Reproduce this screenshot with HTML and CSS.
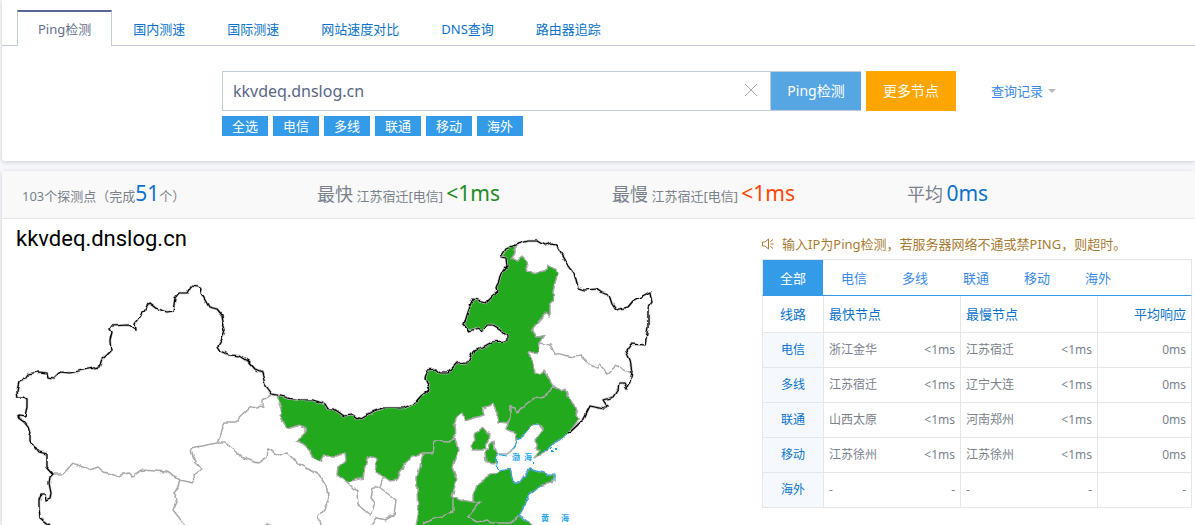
FILE: index.html
```
<!DOCTYPE html>
<html lang="zh-CN">

<head>
    <meta charset="UTF-8">
    <meta name="viewport" content="width=device-width, initial-scale=1.0">
    <title>Ping检测</title>
    <link rel="stylesheet" href="styles.css">
</head>

<body>

    <div class="panel search-panel">
        <nav class="tabs">
            <a href="#" class="active">Ping检测</a>
            <a href="#">国内测速</a>
            <a href="#">国际测速</a>
            <a href="#">网站速度对比</a>
            <a href="#">DNS查询</a>
            <a href="#">路由器追踪</a>
        </nav>

        <form class="search" id="pingForm">
            <div class="search-row">
                <div class="search-box">
                    <input type="text" id="host" name="host" value="kkvdeq.dnslog.cn" aria-label="域名或IP">
                    <button type="button" class="clear" aria-label="清空">
                        <svg width="12" height="12" viewBox="0 0 12 12"><path d="M0 0L12 12M12 0L0 12" stroke="#aaa" fill="none"/></svg>
                    </button>
                </div>
                <button type="button" class="btn btn-ping">Ping检测</button>
                <button type="button" class="btn btn-more">更多节点</button>
                <a href="#" class="history">查询记录<span class="caret"></span></a>
            </div>
            <div class="lines">
                <button type="button">全选</button>
                <button type="button">电信</button>
                <button type="button">多线</button>
                <button type="button">联通</button>
                <button type="button">移动</button>
                <button type="button">海外</button>
            </div>
        </form>
    </div>

    <div class="panel">
        <div class="stats">
            <div>103个探测点（完成<b class="blue">51</b>个）</div>
            <div><span class="name">最快</span> 江苏宿迁[电信] <b class="green">&lt;1ms</b></div>
            <div><span class="name">最慢</span> 江苏宿迁[电信] <b class="red">&lt;1ms</b></div>
            <div><span class="name">平均</span> <b class="blue">0ms</b></div>
        </div>

        <div class="result">
            <div class="map">
                <svg viewBox="2 219 700 306" role="img" aria-label="节点地图">
                    <defs>
                        <!-- roughens the borders -->
                        <filter id="rough" filterUnits="userSpaceOnUse" x="2" y="219" width="700" height="306" color-interpolation-filters="sRGB">
                            <feTurbulence type="fractalNoise" baseFrequency="0.15" numOctaves="1" seed="4"/>
                            <feDisplacementMap in="SourceGraphic" scale="5" xChannelSelector="R" yChannelSelector="G"/>
                        </filter>
                        <path id="border" d="M49 525L40 518L39 507L39 500L41 495L45 495L46 501L50 499L51 493L49 483L50 477L53 474L47 467L47 454L39 452L33 444L29 441L29 437L30 433L28 427L24 422L17 417L19 415L25 416L27 407L27 399L24 397L18 397L17 391L19 382L23 381L28 374L38 372L47 373L48 377L54 378L60 372L70 373L83 370L99 367L102 359L106 356L111 351L110 340L112 332L110 329L111 326L128 325L136 330L135 323L149 303L157 309L167 312L173 311L175 298L179 293L187 293L191 286L198 287L202 289L201 293L209 307L217 309L222 315L223 323L225 330L222 339L218 346L221 351L230 355L240 356L248 361L255 369L262 372L265 386L271 394L277 395L287 398L300 400L313 400L325 404L328 409L334 409L344 416L353 415L358 419L367 414L383 408L404 408L415 403L421 396L430 389L425 379L428 370L435 369L440 373L448 373L457 363L468 362L474 350L483 347L492 342L507 341L507 336L500 329L493 325L487 325L483 331L478 328L469 331L464 325L468 312L473 299L486 302L492 296L497 292L496 288L502 272L507 266L506 258L501 257L506 249L515 245L528 241L537 241L544 245L552 243L559 249L567 263L574 273L578 288L585 290L596 289L602 293L609 295L612 304L616 310L628 307L633 301L650 292L652 303L648 309L648 327L645 345L631 344L626 351L630 360L632 372L630 382L627 388L624 383L619 383L618 389L613 397L603 400L607 406L604 409L590 406L583 420L569 433"/>
                    </defs>
                    <g filter="url(#rough)" stroke-linejoin="round">
                        <g fill="#23a91e" stroke="#a9a9a9" stroke-width="1.5">
                            <!-- Inner Mongolia -->
                            <path d="M277 395L287 398L300 400L313 400L325 404L328 409L334 409L344 416L353 415L358 419L367 414L383 408L404 408L415 403L421 396L430 389L425 379L428 370L435 369L440 373L448 373L457 363L468 362L474 350L483 347L492 342L507 341L507 336L500 329L493 325L487 325L483 331L478 328L469 331L464 325L468 312L473 299L486 302L492 296L497 292L496 288L502 272L507 266L506 258L501 257L506 249L515 246L515 253L512 258L517 261L522 257L526 261L528 272L533 273L547 270L548 265L558 273L555 283L553 292L554 300L550 305L550 317L547 312L533 328L533 331L537 337L544 336L539 343L538 352L528 353L533 362L535 373L540 375L544 371L549 379L553 386L551 392L543 396L533 399L525 405L517 414L515 408L510 407L510 418L508 423L498 422L498 413L493 404L483 408L483 415L465 421L462 413L457 417L454 425L455 438L448 442L435 441L433 453L423 453L413 456L400 470L397 480L390 481L383 476L375 472L377 459L373 456L367 459L365 467L363 478L347 482L337 475L338 467L346 460L345 453L335 456L323 456L320 462L311 456L310 450L301 442L297 441L305 433L305 427L300 425L287 429L280 417L282 413Z"/>
                            <!-- Liaoning -->
                            <path d="M553 386L562 392L565 389L571 401L574 405L579 419L569 433L563 438L553 443L540 456L534 457L540 450L535 448L537 444L536 440L543 430L538 423L532 425L525 433L517 441L516 433L506 429L510 418L510 407L515 408L517 414L525 405L533 399L543 396L551 392Z"/>
                            <!-- Shanxi, Henan, Shandong -->
                            <path d="M423 453L433 453L435 441L448 442L455 438L458 450L452 467L457 480L452 497L460 500L473 502L473 495L478 483L488 476L500 471L510 468L513 482L520 482L523 477L530 469L547 474L555 475L552 483L542 485L528 496L525 505L519 516L533 525V530H414L418 510L417 493L417 477L420 467Z"/>
                            <!-- Beijing, Tianjin -->
                            <path d="M482 428L487 433L490 432L489 441L486 444L485 450L472 450L471 445L475 441L474 435Z"/>
                            <path d="M490 444L493 442L494 448L497 455L496 463L486 462L485 452L489 449Z"/>
                            <path d="M265 526L268 523L272 526Z"/>
                        </g>
                        <g fill="none" stroke="#a9a9a9" stroke-width="1.5">
                            <path d="M53 474L63 474L73 463L90 470L98 467L104 472L117 476L128 473L133 476L142 470L167 472L180 480L194 483L193 475L201 469L193 457L191 448L217 443L220 437L225 422L235 422L250 408L263 406L263 400L271 395"/>
                            <path d="M217 443L225 443L237 452L240 457L258 463L267 457L268 449L280 456L287 453L300 465L310 470L321 477L326 485L329 502L318 517L320 525"/>
                            <path d="M180 480L178 487L174 493L177 500L173 510L185 525"/>
                            <path d="M347 482L357 492L358 505L370 515L375 503L371 498L373 488L380 488L396 500L394 515L385 520L377 518L371 525M380 488L382 480L385 477"/>
                            <path d="M539 343L550 345L555 353L573 357L582 356L590 365L597 368L599 363L607 374L617 365L622 370L631 372"/>
                            <path d="M453 499L453 512L443 516L433 518L423 524M473 502L480 502L468 517L477 522L488 520L492 523L510 523L519 516"/>
                            <path d="M517 441L513 450L507 454L497 454"/>
                        </g>
                        <g fill="none" stroke="#1aa3e8" stroke-width="1">
                            <path d="M538 423L532 425L525 433L517 441L513 450M507 456L497 454L496 466L500 470L510 468L513 482L520 482L530 469L547 474L555 474L555 481M542 485L528 496L525 505L519 516L533 525M569 433L563 438L553 443L540 455"/>
                            <path d="M550 448h2M556 449h2M552 451h2M532 463h2" stroke-width="2"/>
                        </g>
                        <use href="#border" fill="none" stroke="#bbb" stroke-width="2.5"/>
                        <use href="#border" fill="none" stroke="#000" stroke-width="1.2"/>
                    </g>
                    <text class="host" x="16" y="246">kkvdeq.dnslog.cn</text>
                    <g class="sea">
                        <text x="512" y="460">渤</text>
                        <text x="524" y="460">海</text>
                        <text x="541" y="521">黄</text>
                        <text x="561" y="521">海</text>
                    </g>
                </svg>
            </div>

            <div class="summary">
                <p class="notice">
                    <svg width="12" height="12" viewBox="0 0 12 12" fill="none" stroke="#a87b32"><path d="M.5 4H3L6.500 1V11L3 8H.5ZM8.500 3.500L11 1.500M8.500 6H11.500M8.500 8.500L11 10.500"/></svg>
                    输入IP为Ping检测，若服务器网络不通或禁PING，则超时。
                </p>
                <div class="line-tabs">
                    <button type="button" class="active">全部</button>
                    <button type="button">电信</button>
                    <button type="button">多线</button>
                    <button type="button">联通</button>
                    <button type="button">移动</button>
                    <button type="button">海外</button>
                </div>
                <table>
                    <thead>
                        <tr>
                            <th class="line">线路</th>
                            <th class="node">最快节点</th>
                            <th class="node">最慢节点</th>
                            <th class="avg">平均响应</th>
                        </tr>
                    </thead>
                    <tbody>
                        <tr>
                            <th>电信</th>
                            <td><div>浙江金华<span>&lt;1ms</span></div></td>
                            <td><div>江苏宿迁<span>&lt;1ms</span></div></td>
                            <td class="avg">0ms</td>
                        </tr>
                        <tr>
                            <th>多线</th>
                            <td><div>江苏宿迁<span>&lt;1ms</span></div></td>
                            <td><div>辽宁大连<span>&lt;1ms</span></div></td>
                            <td class="avg">0ms</td>
                        </tr>
                        <tr>
                            <th>联通</th>
                            <td><div>山西太原<span>&lt;1ms</span></div></td>
                            <td><div>河南郑州<span>&lt;1ms</span></div></td>
                            <td class="avg">0ms</td>
                        </tr>
                        <tr>
                            <th>移动</th>
                            <td><div>江苏徐州<span>&lt;1ms</span></div></td>
                            <td><div>江苏徐州<span>&lt;1ms</span></div></td>
                            <td class="avg">0ms</td>
                        </tr>
                        <tr>
                            <th>海外</th>
                            <td><div>-<span>-</span></div></td>
                            <td><div>-<span>-</span></div></td>
                            <td class="avg">-</td>
                        </tr>
                    </tbody>
                </table>
            </div>
        </div>
    </div>

</body>

</html>
```
FILE: styles.css
```
* {
    box-sizing: border-box;
}

body {
    margin: 0;
    padding-left: 2px;
    background-color: #f6f8fb;
    color: #7a828c;
    font: 13px/20px "Noto Sans", "Noto Sans CJK SC", sans-serif;
}

a {
    color: #0b73cc;
    text-decoration: none;
}

button {
    border: none;
    padding: 0;
    background: none;
    font: inherit;
    cursor: pointer;
}

.panel {
    background-color: #fff;
    box-shadow: 0 1px 5px rgba(0, 0, 0, 0.18);
}

.search-panel {
    margin-bottom: 10px;
    padding-top: 10px;
    border-radius: 0 0 0 3px;
}

.tabs {
    display: flex;
    padding-left: 15px;
    border-bottom: 1px solid #c3cad9;
}

.tabs a {
    height: 35px;
    padding: 7px 20px 0;
    border: 1px solid transparent;
    border-top-width: 2px;
    border-bottom: none;
}

.tabs .active {
    height: 36px;
    margin-bottom: -1px;
    border-color: #566890 #c3cad9;
    background-color: #fff;
    color: #66708c;
}

.search {
    padding: 25px 20px 25px 220px;
}

.search-row {
    display: flex;
    height: 40px;
}

.search-box {
    display: flex;
    flex: 0 1 549px;
    border: 1px solid #c3cad9;
}

.search-box input {
    flex: 1;
    min-width: 0;
    padding: 0 10px;
    border: none;
    outline: none;
    color: #5a6785;
    font: inherit;
    font-size: 16px;
}

.clear {
    width: 38px;
}

.btn {
    flex: none;
    width: 90px;
    color: #fff;
    font-size: 14px;
}

.btn-ping {
    border: 1px solid #c3cad9;
    border-width: 1px 0;
    background-color: #56a6e3;
}

.btn-more {
    margin-left: 5px;
    background-color: #ffa500;
}

.history {
    display: flex;
    align-items: center;
    gap: 5px;
    margin-left: 35px;
    white-space: nowrap;
    color: #3a8ae5;
}

.caret {
    border: 4px solid transparent;
    border-top-color: #bbb;
    border-bottom: none;
}

.lines {
    display: flex;
    gap: 5px;
    padding-top: 5px;
}

.lines button {
    height: 20px;
    padding: 0 10px;
    background-color: #339be8;
    color: #fff;
}

.stats {
    display: grid;
    grid-template-columns: repeat(4, 1fr);
    padding-right: 13px;
    border-bottom: 1px solid #e6e6e6;
    background-color: #f9f9f9;
    line-height: 44px;
    white-space: nowrap;
}

.stats div {
    padding-left: 20px;
}

.stats .name {
    font-size: 18px;
}

.stats b {
    font-size: 21px;
    font-weight: normal;
}

.blue {
    color: #0b73cc;
}

.green {
    color: #228b22;
}

.red {
    color: #ff4500;
}

.result {
    display: flex;
    justify-content: space-between;
    padding-right: 3px;
}

.map {
    flex: 0 1 700px;
    min-width: 0;
}

.map svg {
    display: block;
    width: 100%;
}

.host {
    font: 22px Roboto, "Liberation Sans", sans-serif;
}

.sea {
    fill: #1aa3e8;
    font: bold 8px "Noto Sans CJK SC", sans-serif;
}

.summary {
    flex: 0 0 430px;
    padding-top: 15px;
}

.notice {
    display: flex;
    align-items: center;
    gap: 8px;
    margin: 0 0 5px;
    color: #a87b32;
}

.line-tabs {
    display: flex;
    gap: 1px;
    border: 1px solid #e6e6e6;
    border-bottom: 1px solid #339be8;
}

.line-tabs button {
    width: 60px;
    height: 35px;
    color: #3a8ae5;
}

.line-tabs .active {
    background-color: #339be8;
    color: #fff;
}

table {
    width: 100%;
    border-collapse: collapse;
    table-layout: fixed;
    font-size: 12px;
}

th,
td {
    height: 35px;
    padding: 0 5px;
    border: 1px solid #e6e6e6;
    text-align: left;
}

th {
    color: #0b73cc;
    font-weight: normal;
}

thead th {
    height: 36px;
    border-top: none;
    font-size: 13px;
}

thead .line {
    width: 61px;
}

thead .node {
    width: 137px;
}

thead .line,
tbody th {
    text-align: center;
}

tbody th {
    background-color: #f5f9fd;
}

td div {
    display: flex;
    justify-content: space-between;
}

.avg {
    text-align: right;
}
```
